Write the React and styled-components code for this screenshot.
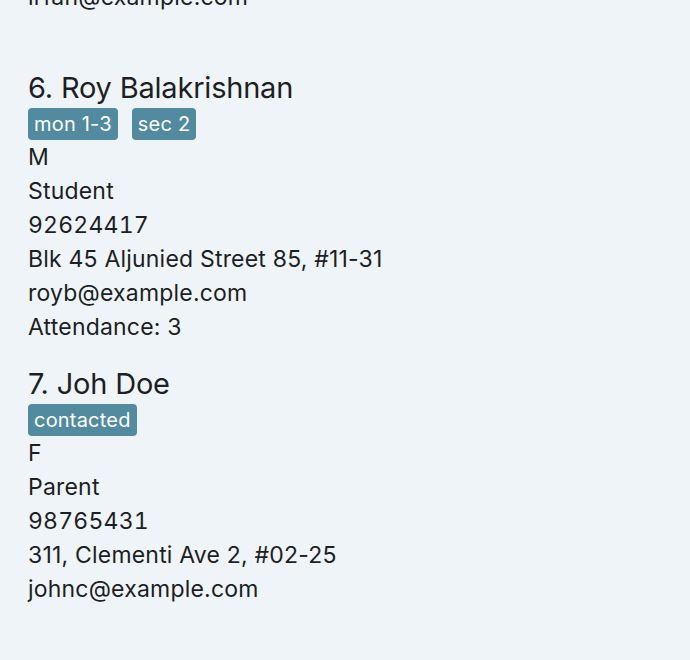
import React from "react";
import styled, { createGlobalStyle } from "styled-components";

const GlobalStyle = createGlobalStyle`
  html, body {
    margin: 0;
    padding: 0;
    background: #eff4f9;
  }
  body {
    font-family: Inter, "Noto Sans", sans-serif;
    color: #1c1f23;
    overflow: hidden;
  }
`;

const List = styled.div`
  display: flex;
  flex-direction: column;
  gap: 20px;
  padding: 0 28px;
  margin-top: -20px;
  height: 680px;
`;

const Card = styled.div`
  display: flex;
  flex-direction: column;
`;

const Name = styled.div`
  font-size: 29px;
  line-height: 40px;
  letter-spacing: -0.2px;
`;

const Tags = styled.div`
  display: flex;
  gap: 14px;
`;

const Tag = styled.span`
  background: #528aa0;
  color: #ffffff;
  font-size: 20px;
  line-height: 32px;
  letter-spacing: 0.2px;
  padding: 0 6px;
  border-radius: 4px;
`;

const Line = styled.div`
  font-size: 23px;
  line-height: 34px;
  min-height: 34px;
  letter-spacing: 0.2px;
  font-variant-numeric: ${(p) => (p.$numeric ? "tabular-nums" : "normal")};
`;

const persons = [
  {
    index: 6,
    name: "Roy Balakrishnan",
    tags: ["mon 1-3", "sec 2"],
    gender: "M",
    role: "Student",
    phone: "92624417",
    address: "Blk 45 Aljunied Street 85, #11-31",
    email: "royb@example.com",
    attendance: 3,
  },
  {
    index: 7,
    name: "Joh Doe",
    tags: ["contacted"],
    gender: "F",
    role: "Parent",
    phone: "98765431",
    address: "311, Clementi Ave 2, #02-25",
    email: "johnc@example.com",
  },
];

export default function App() {
  return (
    <>
      <GlobalStyle />
      <List>
        <Card>
          <Line>irfan@example.com</Line>
          <Line />
        </Card>
        {persons.map((p) => (
          <Card key={p.index}>
            <Name>{p.index}. {p.name}</Name>
            <Tags>
              {p.tags.map((t) => (
                <Tag key={t}>{t}</Tag>
              ))}
            </Tags>
            <Line>{p.gender}</Line>
            <Line>{p.role}</Line>
            <Line $numeric>{p.phone}</Line>
            <Line>{p.address}</Line>
            <Line>{p.email}</Line>
            {p.attendance !== undefined && <Line>Attendance: {p.attendance}</Line>}
          </Card>
        ))}
      </List>
    </>
  );
}
